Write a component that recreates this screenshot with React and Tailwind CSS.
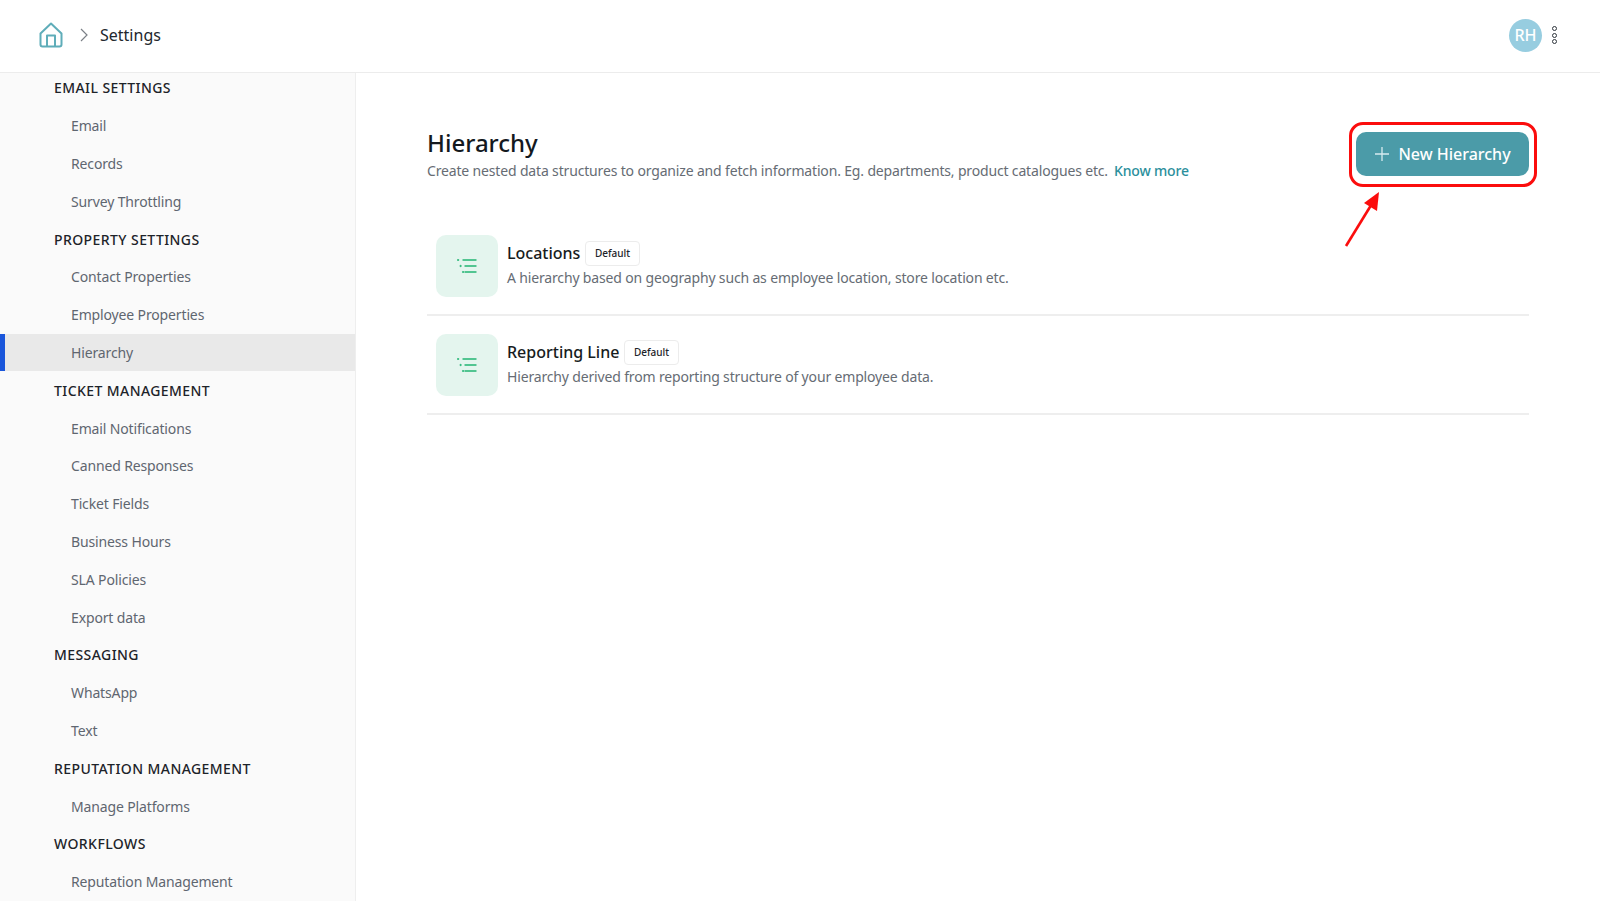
import React from 'react';

const sections = [
  { title: 'EMAIL SETTINGS', items: ['Email', 'Records', 'Survey Throttling'] },
  { title: 'PROPERTY SETTINGS', items: ['Contact Properties', 'Employee Properties', 'Hierarchy'] },
  { title: 'TICKET MANAGEMENT', items: ['Email Notifications', 'Canned Responses', 'Ticket Fields', 'Business Hours', 'SLA Policies', 'Export data'] },
  { title: 'MESSAGING', items: ['WhatsApp', 'Text'] },
  { title: 'REPUTATION MANAGEMENT', items: ['Manage Platforms'] },
  { title: 'WORKFLOWS', items: ['Reputation Management'] },
];

const hierarchies = [
  { name: 'Locations', desc: 'A hierarchy based on geography such as employee location, store location etc.' },
  { name: 'Reporting Line', desc: 'Hierarchy derived from reporting structure of your employee data.' },
];

const HomeIcon = () => (
  <svg width="24" height="26" viewBox="0 0 24 26" fill="none" stroke="#5fadb9" strokeWidth="2" strokeLinejoin="round">
    <path d="M1.5 11.5 L12 1.5 L22.5 11.5 V22.5 Q22.5 24.5 20.5 24.5 H3.5 Q1.5 24.5 1.5 22.5 Z" />
    <path d="M8 24.5 V13.5 H16 V24.5" />
  </svg>
);

const ListIcon = () => (
  <svg width="20" height="16" viewBox="0 0 20 16" fill="none" stroke="#22b573" strokeWidth="1.4" strokeLinecap="round">
    <path d="M6 2 H19" />
    <path d="M8 8 H19" />
    <path d="M8 14 H19" />
    <circle cx="1" cy="2" r="0.7" fill="#22b573" strokeWidth="0.6" />
    <circle cx="3.5" cy="8" r="0.7" fill="#22b573" strokeWidth="0.6" />
    <circle cx="6" cy="14" r="0.7" fill="#22b573" strokeWidth="0.6" />
  </svg>
);

const Sidebar = () => (
  <aside className="w-[356px] shrink-0 bg-[#fafafa] border-r border-[#eeeeee] overflow-hidden">
    <div className="-mt-[4px]">
      {sections.map((section) => (
        <div key={section.title}>
          <div className="h-[37.8px] flex items-center pl-[54px] text-[14px] font-medium tracking-[0.42px] text-[#1d2329]">
            {section.title}
          </div>
          {section.items.map((item) => (
            <div
              key={item}
              className={`h-[37.8px] flex items-center pl-[71px] text-[14px] tracking-[-0.14px] text-[#5f6670] ${
                item === 'Hierarchy' ? 'bg-[#e9e9e9] border-l-[5px] border-[#1a56db] !pl-[66px]' : ''
              }`}
            >
              {item}
            </div>
          ))}
        </div>
      ))}
    </div>
  </aside>
);

const App = () => {
  return (
    <div className="h-[901px] flex flex-col overflow-hidden bg-white font-['Noto_Sans',sans-serif]">
      <header className="h-[73px] shrink-0 flex items-center justify-between border-b border-[#ececec] pb-[2px] pl-[39px] pr-[43px]">
        <div className="flex items-center">
          <HomeIcon />
          <svg className="ml-[16px]" width="10" height="14" viewBox="0 0 10 14" fill="none" stroke="#7b8087" strokeWidth="1.2">
            <path d="M2 1 L8 7 L2 13" />
          </svg>
          <span className="ml-[11px] text-[16px] text-[#22272d]">Settings</span>
        </div>
        <div className="flex items-center">
          <div className="w-[33px] h-[33px] rounded-full bg-[#97cde0] flex items-center justify-center text-white text-[16px] font-medium">RH</div>
          <div className="ml-[10px] flex flex-col gap-[1.2px]">
            <span className="w-[5px] h-[5px] rounded-full border-[1.5px] border-[#2f363d]" />
            <span className="w-[5px] h-[5px] rounded-full border-[1.5px] border-[#2f363d]" />
            <span className="w-[5px] h-[5px] rounded-full border-[1.5px] border-[#2f363d]" />
          </div>
        </div>
      </header>
      <div className="flex-1 flex min-h-0">
        <Sidebar />
        <main className="flex-1 pl-[71px] pr-[71px] pt-[57px]">
          <div className="flex justify-between items-start relative">
            <div>
              <h1 className="text-[24px] leading-[28px] font-medium text-[#14191e] mt-[-1px]">Hierarchy</h1>
              <p className="mt-[1px] text-[14px] tracking-[-0.16px] leading-[26px] text-[#666c74]">
                Create nested data structures to organize and fetch information. Eg. departments, product catalogues etc.
                <span className="ml-[6px] font-medium text-[#2b8f9c]">Know more</span>
              </p>
            </div>
            <button className="w-[173px] h-[44px] mt-[2px] rounded-[10px] bg-[#4b9ba8] text-white text-[16px] font-medium flex items-center justify-center gap-[8px]">
              <svg width="16" height="16" viewBox="0 0 16 16" stroke="#d8ecef" strokeWidth="1.3">
                <path d="M8 1 V15 M1 8 H15" />
              </svg>
              New Hierarchy
            </button>
            {/* red annotation over the button */}
            <div className="absolute right-[-8px] top-[-8px] w-[188px] h-[65px] rounded-[14px] border-[3px] border-[#fb0d0d]" />
            <svg className="absolute right-[141px] top-[60px]" width="44" height="58" viewBox="0 0 44 58" fill="none">
              <path d="M2 56 L29 12" stroke="#fb0d0d" strokeWidth="2.6" />
              <path d="M35 2 L33 21 L20 13 Z" fill="#fb0d0d" />
            </svg>
          </div>
          <div className="mt-[34px]">
            {hierarchies.map((row) => (
              <div key={row.name} className="h-[99px] flex items-start pt-[18px] pl-[9px] border-b-2 border-[#eeeeee] first:h-[98px] first:pt-[17px]">
                <div className="w-[62px] h-[62px] rounded-[10px] bg-[#e4f5ee] flex items-center justify-center">
                  <ListIcon />
                </div>
                <div className="ml-[9px]">
                  <div className="flex items-center h-[26px] mt-[5px]">
                    <span className="text-[16px] font-medium text-[#171c21]">{row.name}</span>
                    <span className="ml-[5px] h-[25px] px-[8.5px] flex items-center rounded-[4px] border border-[#ececec] text-[10px] font-medium text-[#1d2329]">Default</span>
                  </div>
                  <p className="text-[14px] tracking-[-0.16px] leading-[24px] text-[#666c74]">{row.desc}</p>
                </div>
              </div>
            ))}
          </div>
        </main>
      </div>
    </div>
  );
};

export default App;
